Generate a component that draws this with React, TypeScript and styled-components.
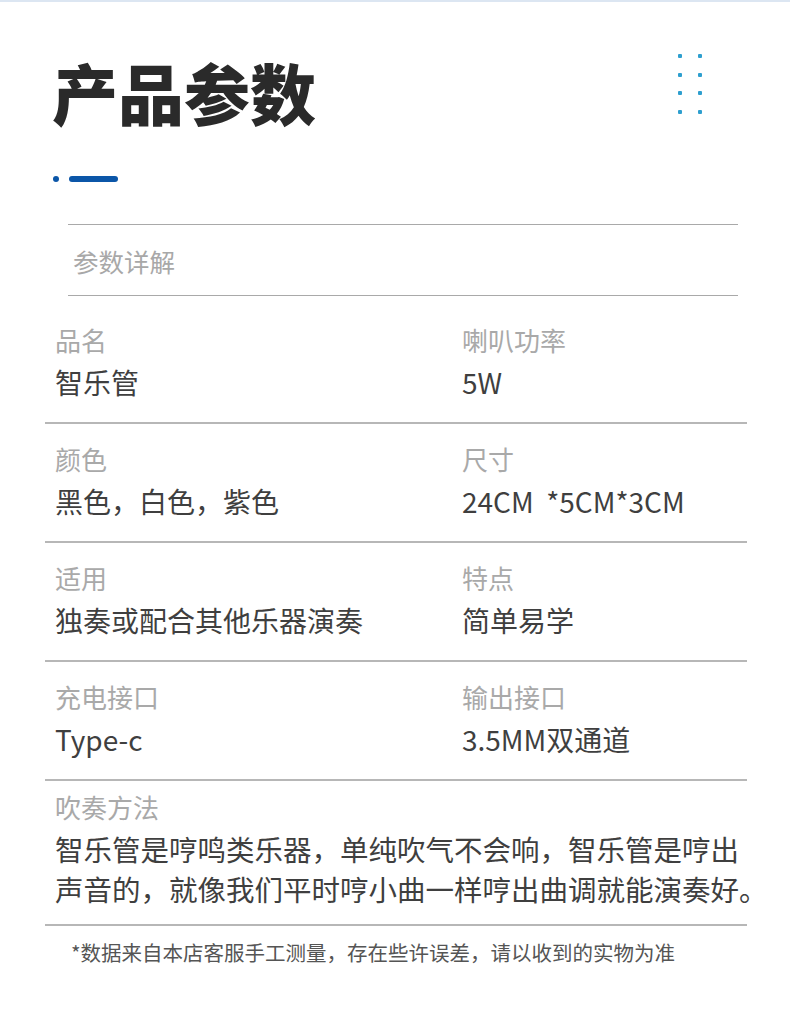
import React from 'react'
import styled, { createGlobalStyle } from 'styled-components'

const GlobalStyle = createGlobalStyle`
  body {
    margin: 0;
    background: #fff;
    font-family: "Noto Sans CJK SC", "Noto Sans", sans-serif;
  }
`

const Page = styled.div`
  width: 790px;
  height: 1021px;
  border-top: 2px solid #dce6f2;
  box-sizing: border-box;
  overflow: hidden;
`

const Header = styled.div`
  display: flex;
  justify-content: space-between;
  align-items: flex-start;
  padding: 52px 88px 0 52px;
`

const Title = styled.h1`
  margin: 4px 0 0;
  font-size: 66px;
  line-height: 66px;
  font-weight: 900;
  color: #2a2a2a;
  letter-spacing: 0;
`

const Dots = styled.div`
  display: grid;
  grid-template-columns: repeat(2, 4px);
  column-gap: 16px;
  row-gap: 14.7px;
`

const Dot = styled.span`
  width: 4px;
  height: 4px;
  background: #2e9fcf;
  border-radius: 1px;
`

const Accent = styled.div`
  display: flex;
  align-items: center;
  gap: 10px;
  margin: 52px 0 0 53px;
`

const AccentDot = styled.span`
  width: 6px;
  height: 6px;
  border-radius: 50%;
  background: #0b56a8;
`

const AccentBar = styled.span`
  width: 49px;
  height: 6px;
  border-radius: 3px;
  background: #0b56a8;
`

const Section = styled.div`
  margin: 42px 52px 0 68px;
  height: 70px;
  border-top: 1px solid #a9a9a9;
  border-bottom: 1px solid #a9a9a9;
  display: flex;
  align-items: center;
  padding-left: 5px;
  font-size: 25.5px;
  color: #a8a8a8;
`

const Table = styled.div`
  margin: 9px 43px 0 45px;
`

const Row = styled.div<{ $top?: number; $bottom?: number }>`
  display: grid;
  grid-template-columns: 407px 1fr;
  padding: ${p => p.$top ?? 17}px 10px ${p => p.$bottom ?? 20}px;
  border-bottom: 2px solid #b7b7b7;
`

const Cell = styled.div<{ $wide?: boolean }>`
  display: flex;
  flex-direction: column;
  gap: 4px;
  grid-column: ${p => (p.$wide ? '1 / -1' : 'auto')};
`

const Label = styled.div`
  font-size: 26px;
  line-height: 36px;
  color: #a9a9a9;
`

const Value = styled.div`
  font-size: 28px;
  line-height: 40px;
  color: #3f3f3f;
  white-space: pre;
`

const Paragraph = styled.div`
  font-size: 28.5px;
  line-height: 40px;
  color: #3f3f3f;
  white-space: nowrap;
  margin-right: -30px;
`

const Note = styled.div`
  margin: 12px 0 0 71px;
  font-size: 20.5px;
  line-height: 28px;
  color: #555;
`

const specs: [string, string][][] = [
  [['品名', '智乐管'], ['喇叭功率', '5W']],
  [['颜色', '黑色，白色，紫色'], ['尺寸', '24CM  *5CM*3CM']],
  [['适用', '独奏或配合其他乐器演奏'], ['特点', '简单易学']],
  [['充电接口', 'Type-c'], ['输出接口', '3.5MM双通道']],
]

const App = () => {
  return (
    <Page>
      <GlobalStyle />
      <Header>
        <Title>产品参数</Title>
        <Dots>
          {Array.from({ length: 8 }).map((_, i) => <Dot key={i} />)}
        </Dots>
      </Header>
      <Accent>
        <AccentDot />
        <AccentBar />
      </Accent>
      <Section>参数详解</Section>
      <Table>
        {specs.map((row, i) => (
          <Row key={i}>
            {row.map(([label, value]) => (
              <Cell key={label}>
                <Label>{label}</Label>
                <Value>{value}</Value>
              </Cell>
            ))}
          </Row>
        ))}
        <Row $top={8} $bottom={15}>
          <Cell $wide>
            <Label>吹奏方法</Label>
            <Paragraph>
              智乐管是哼鸣类乐器，单纯吹气不会响，智乐管是哼出
              <br />
              声音的，就像我们平时哼小曲一样哼出曲调就能演奏好。
            </Paragraph>
          </Cell>
        </Row>
      </Table>
      <Note>*数据来自本店客服手工测量，存在些许误差，请以收到的实物为准</Note>
    </Page>
  )
}

export default App
